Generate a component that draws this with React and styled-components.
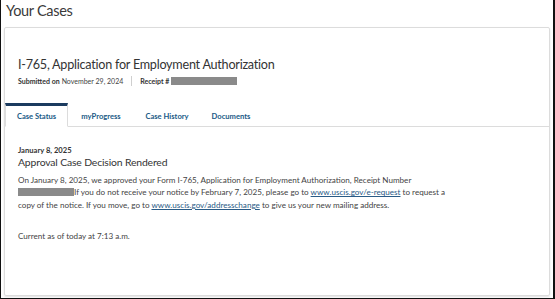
import styled, { createGlobalStyle } from "styled-components";

const GlobalStyle = createGlobalStyle`
  html, body {
    margin: 0;
    padding: 0;
    background: #ffffff;
  }
  body {
    font-family: "Lato", "Open Sans", sans-serif;
    color: #333333;
  }
`;

const Frame = styled.div`
  box-sizing: border-box;
  width: 555px;
  height: 299px;
  border-left: 1px solid #111;
  border-right: 2px solid #111;
  border-bottom: 1px solid #111;
  padding: 0 3px 2px 3px;
  display: flex;
  flex-direction: column;
  overflow: hidden;
`;

const PageTitle = styled.h1`
  margin: 0;
  padding: 1px 0 0 2px;
  height: 26px;
  font-family: "Lato", sans-serif;
  font-weight: 400;
  font-size: 14.5px;
  letter-spacing: -0.3px;
  line-height: 20px;
  color: #3a3a3a;
`;

const Card = styled.div`
  flex: 1;
  border: 1px solid #dcdcdc;
  border-radius: 2px;
  box-shadow: 0 1px 2px rgba(0, 0, 0, 0.12);
  display: flex;
  flex-direction: column;
`;

const Header = styled.div`
  padding: 28px 0 0 13px;
  height: 47px;
`;

const FormTitle = styled.h2`
  margin: 0;
  font-family: "Lato", sans-serif;
  font-weight: 400;
  font-size: 12.6px;
  letter-spacing: -0.24px;
  line-height: 18px;
  color: #333;
`;

const Meta = styled.div`
  display: flex;
  align-items: center;
  margin-top: 2px;
  font-size: 7px;
  color: #444;
`;

const MetaItem = styled.span`
  display: flex;
  align-items: center;
  gap: 2px;
`;

const Bold = styled.b`
  font-weight: 700;
  color: #333;
`;

const Divider = styled.span`
  width: 1px;
  height: 10px;
  background: #cfcfcf;
  margin: 0 8px;
`;

const Redacted = styled.span`
  display: inline-block;
  width: ${(p) => p.w}px;
  height: 8px;
  background: #8a8a8a;
  vertical-align: -1px;
`;

const Tabs = styled.div`
  display: flex;
  align-items: flex-end;
  height: 24px;
`;

const Tab = styled.div`
  box-sizing: border-box;
  height: 24px;
  width: ${(p) => p.w}px;
  display: flex;
  align-items: center;
  justify-content: center;
  white-space: nowrap;
  font-size: 7.6px;
  font-weight: 700;
  color: #205a86;
  border-top: ${(p) => (p.active ? "3px solid #1b3b5f" : "3px solid transparent")};
  border-left: ${(p) => (p.active ? "1px solid #dcdcdc" : "none")};
  border-right: ${(p) => (p.active ? "1px solid #dcdcdc" : "none")};
  border-bottom: ${(p) => (p.active ? "1px solid transparent" : "1px solid #dcdcdc")};
`;

const TabFill = styled.div`
  flex: 1;
  height: 24px;
  box-sizing: border-box;
  border-bottom: 1px solid #dcdcdc;
`;

const Body = styled.div`
  padding: 18px 13px 0 13px;
`;

const CaseDate = styled.div`
  font-size: 7.6px;
  font-weight: 700;
  color: #333;
  line-height: 10px;
`;

const Status = styled.h3`
  margin: 0 0 4px 0;
  font-family: "Lato", sans-serif;
  font-weight: 400;
  font-size: 10.4px;
  letter-spacing: -0.15px;
  line-height: 15px;
  color: #333;
`;

const Paragraph = styled.p`
  margin: 0;
  font-size: 8.1px;
  line-height: 12.4px;
  color: #444;
  white-space: nowrap;
`;

const Link = styled.a`
  color: #2a5b86;
  text-decoration: underline;
`;

const Current = styled.p`
  margin: 19px 0 0 0;
  font-size: 8.1px;
  line-height: 12px;
  color: #444;
`;

export default function App() {
  return (
    <>
      <GlobalStyle />
      <Frame>
        <PageTitle>Your Cases</PageTitle>
        <Card>
          <Header>
            <FormTitle>I-765, Application for Employment Authorization</FormTitle>
            <Meta>
              <MetaItem>
                <Bold>Submitted on</Bold> November 29, 2024
              </MetaItem>
              <Divider />
              <MetaItem>
                <Bold>Receipt #</Bold>
                <Redacted w={66} />
              </MetaItem>
            </Meta>
          </Header>
          <Tabs>
            <Tab active w={63}>Case Status</Tab>
            <Tab w={66}>myProgress</Tab>
            <Tab w={66}>Case History</Tab>
            <Tab w={62}>Documents</Tab>
            <TabFill />
          </Tabs>
          <Body>
            <CaseDate>January 8, 2025</CaseDate>
            <Status>Approval Case Decision Rendered</Status>
            <Paragraph>
              On January 8, 2025, we approved your Form I-765, Application for
              Employment Authorization, Receipt Number
              <br />
              <Redacted w={56} />
              If you do not receive your notice by February 7, 2025, please go
              to <Link href="#">www.uscis.gov/e-request</Link> to request a
              <br />
              copy of the notice. If you move, go to{" "}
              <Link href="#">www.uscis.gov/addresschange</Link> to give us your
              new mailing address.
            </Paragraph>
            <Current>Current as of today at 7:13 a.m.</Current>
          </Body>
        </Card>
      </Frame>
    </>
  );
}
